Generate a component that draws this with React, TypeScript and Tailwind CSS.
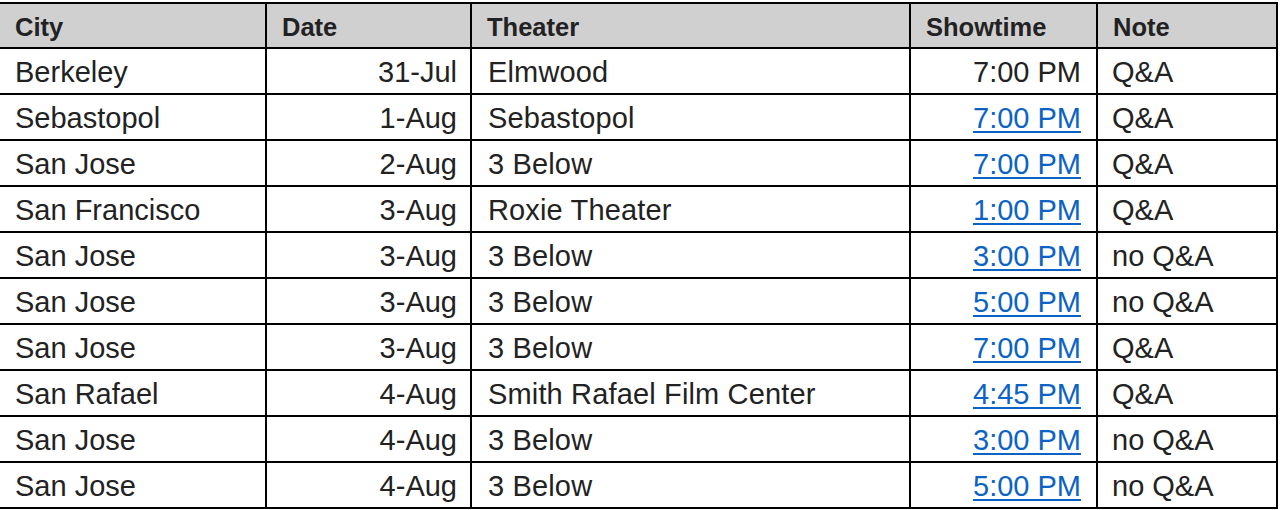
import React from 'react';

interface Show {
  city: string;
  date: string;
  theater: string;
  time: string;
  linked: boolean;
  note: string;
}

const SHOWS: Show[] = [
  { city: 'Berkeley', date: '31-Jul', theater: 'Elmwood', time: '7:00 PM', linked: false, note: 'Q&A' },
  { city: 'Sebastopol', date: '1-Aug', theater: 'Sebastopol', time: '7:00 PM', linked: true, note: 'Q&A' },
  { city: 'San Jose', date: '2-Aug', theater: '3 Below', time: '7:00 PM', linked: true, note: 'Q&A' },
  { city: 'San Francisco', date: '3-Aug', theater: 'Roxie Theater', time: '1:00 PM', linked: true, note: 'Q&A' },
  { city: 'San Jose', date: '3-Aug', theater: '3 Below', time: '3:00 PM', linked: true, note: 'no Q&A' },
  { city: 'San Jose', date: '3-Aug', theater: '3 Below', time: '5:00 PM', linked: true, note: 'no Q&A' },
  { city: 'San Jose', date: '3-Aug', theater: '3 Below', time: '7:00 PM', linked: true, note: 'Q&A' },
  { city: 'San Rafael', date: '4-Aug', theater: 'Smith Rafael Film Center', time: '4:45 PM', linked: true, note: 'Q&A' },
  { city: 'San Jose', date: '4-Aug', theater: '3 Below', time: '3:00 PM', linked: true, note: 'no Q&A' },
  { city: 'San Jose', date: '4-Aug', theater: '3 Below', time: '5:00 PM', linked: true, note: 'no Q&A' },
];

const HEADERS = ['City', 'Date', 'Theater', 'Showtime', 'Note'];

export default function App() {
  return (
    <div className="bg-white w-[1282px] h-[510px] overflow-hidden font-['Liberation_Sans',Arial,sans-serif] text-[#222]">
      <div className="mt-[2px] w-[1278px] bg-black pt-[2px] pr-[2px] pb-[2px] grid grid-cols-[265px_203px_437px_185px_178px] gap-[2px]">
        {/* Header */}
        {HEADERS.map((h) => (
          <div
            key={h}
            className="h-[43px] bg-[#d1d0d1] flex items-center pt-[3px] px-[15px] text-[25.5px] font-bold"
          >
            {h}
          </div>
        ))}

        {/* Rows */}
        {SHOWS.map((s, i) => (
          <React.Fragment key={i}>
            <div className="h-[44px] bg-white flex items-center pt-[3px] pl-[15px] text-[29px]">{s.city}</div>
            <div className="h-[44px] bg-white flex items-center justify-end pt-[3px] pr-[13px] text-[29px]">{s.date}</div>
            <div className="h-[44px] bg-white flex items-center pt-[3px] pl-[16px] text-[29px] tracking-[0.15px]">{s.theater}</div>
            <div className="h-[44px] bg-white flex items-center justify-end pt-[3px] pr-[15px] text-[29px]">
              {s.linked ? (
                <a href="#" className="text-[#0b63c6] underline underline-offset-[3px]">{s.time}</a>
              ) : (
                s.time
              )}
            </div>
            <div className="h-[44px] bg-white flex items-center pt-[3px] pl-[14px] text-[29px]">{s.note}</div>
          </React.Fragment>
        ))}
      </div>
    </div>
  );
}
